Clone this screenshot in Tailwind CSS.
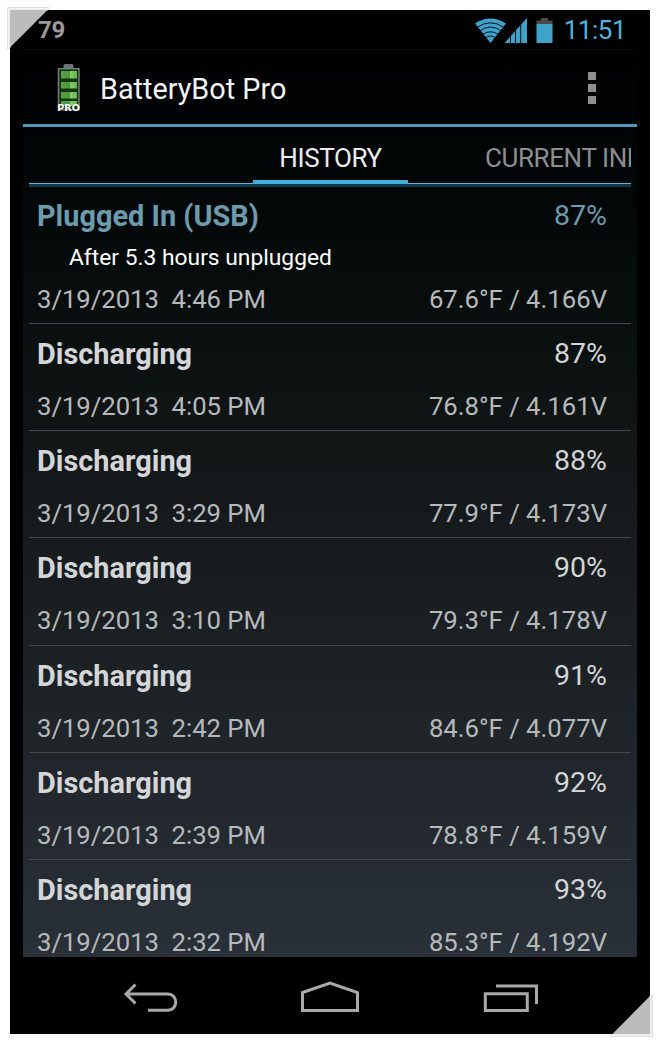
<!DOCTYPE html>
<html lang="en">
<head>
    <meta charset="UTF-8">
    <title>BatteryBot Pro</title>
    <script src="https://cdn.jsdelivr.net/npm/@tailwindcss/browser@4"></script>
</head>
<body class="bg-white w-[660px] h-[1044px] overflow-hidden p-[10px] font-['Roboto','Liberation_Sans',sans-serif]">
    <div class="relative w-[640px] h-[1024px] bg-black flex flex-col px-[13px]">
        <!-- Status bar -->
        <div class="h-10 shrink-0 flex items-center pt-px pl-[15px] pr-[11px] border-b border-[#0d0d0d]">
            <span class="text-[24px] font-bold text-[#9a9a9a] tracking-[-0.3px]">79</span>
            <svg class="ml-auto w-[80px] h-[28px]" viewBox="474 15 80 28">
                <path d="M475 22.500 Q490 12.500 506 22.500 L490.500 42 Z" fill="#3ea2cb"/>
                <g fill="none" stroke="#031019" stroke-width="1">
                    <path d="M477 26.500 Q490.500 17 504 26.500"/>
                    <path d="M479.500 30 Q490.500 22 501.500 30"/>
                    <path d="M482.500 33.500 Q490.500 28 498.500 33.500"/>
                    <path d="M485 37 Q490.500 33 496 37"/>
                </g>
                <path d="M504.500 42 L527 17 V42 Z" fill="#3ea2cb"/>
                <path d="M510.500 30V42M515.500 25V42M520.700 20V42" stroke="#031019" stroke-width="1"/>
                <path d="M541 17H548V19.500H552.500V24H536.500V19.500H541Z" fill="#4b4b49"/>
                <path d="M536.500 23H552.500V42H536.500Z" fill="#3ea2cb"/>
            </svg>
            <span class="ml-[10px] text-[26px] tracking-[-0.5px] text-[#52b2dc]">11:51</span>
        </div>

        <!-- App screen -->
        <div class="h-[907px] shrink-0 flex flex-col overflow-hidden bg-linear-to-b from-[#000202] via-[#131718] via-45% to-[#2a3038]">
            <header class="h-[77px] shrink-0 flex items-center pl-[33px] pr-[41px] border-b-[3px] border-[#5197b8]">
                <svg class="w-[25px] h-[50px] mt-0.5" viewBox="56 63 25 50">
                    <defs>
                        <linearGradient id="cell" x1="0" x2="1" y1="0" y2="0">
                            <stop offset="0" stop-color="#5a9f49"/>
                            <stop offset=".55" stop-color="#489a38"/>
                            <stop offset=".6" stop-color="#86cb6b"/>
                            <stop offset="1" stop-color="#66b552"/>
                        </linearGradient>
                    </defs>
                    <rect x="63.500" y="64" width="10" height="5" rx="1.500" fill="#6d7379"/>
                    <rect x="58.500" y="68.700" width="20.500" height="41" fill="#123410" stroke="#747c73" stroke-width="1.500"/>
                    <g fill="url(#cell)">
                        <rect x="61" y="71" width="16" height="7.500"/>
                        <rect x="61" y="82" width="16" height="6.500"/>
                        <rect x="61" y="92" width="16" height="6.500"/>
                        <rect x="61" y="101" width="16" height="5"/>
                    </g>
                    <text x="57.300" y="111.300" textLength="22.500" lengthAdjust="spacingAndGlyphs" font-family="DejaVu Sans" font-weight="bold" font-size="9.300" fill="#fff">PRO</text>
                </svg>
                <h1 class="ml-[19px] pt-[5px] text-[28.8px] text-[#f4f4f4]">BatteryBot Pro</h1>
                <div class="ml-auto mt-0.5 flex flex-col gap-1">
                    <span class="size-2 bg-[#8f8f8f]"></span>
                    <span class="size-2 bg-[#8f8f8f]"></span>
                    <span class="size-2 bg-[#8f8f8f]"></span>
                </div>
            </header>

            <!-- Tabs -->
            <nav class="mx-1.5 h-[60px] shrink-0 flex overflow-hidden border-b-3 border-[#10374b]">
                <div class="w-full h-[57px] flex border-b border-[#5fb3d6] whitespace-nowrap text-[26px] leading-[63px] tracking-[-0.4px]">
                    <span class="ml-[224px] w-[155px] shrink-0 h-[57px] text-center text-[#ececec] border-b-[4px] border-[#41aedb]">HISTORY</span>
                    <span class="ml-[77px] shrink-0 text-[#8c8e8f]">CURRENT INFO</span>
                </div>
            </nav>

            <ul id="history" class="mx-1.5 shrink-0"></ul>
        </div>

        <!-- Navigation bar -->
        <div class="flex-1 flex items-start">
            <svg class="w-[614px] h-[77px]" viewBox="23 957 614 77" fill="none" stroke="#a8a8a8" stroke-width="3">
                <path d="M135.500 984.500 L126 994 L135.500 1003.500 M127 994 H167.500 C178.500 994 178.500 1010.200 167.500 1010.200 H148"/>
                <path d="M302.500 992.500 L330 983 L357.500 992.500 V1010.500 H302.500 Z"/>
                <path d="M485.300 993.800 H527.300 V1010.500 H485.300 Z M496 986 H536.500 V1004"/>
            </svg>
        </div>

        <!-- Photo corners -->
        <svg class="absolute -top-[3px] -left-[3px] size-[44px]" viewBox="7 7 44 44">
            <path d="M7.500 49 V7.500 H49 L48 10 H10 V48 Z" fill="#f4f4f4" stroke="#dedede"/>
            <path d="M10 10 H47.500 L10 47.500 Z" fill="#bcbcbc"/>
        </svg>
        <svg class="absolute -bottom-[3px] -right-[3px] size-[44px]" viewBox="609 993 44 44">
            <path d="M652.500 995 V1036.500 H611 L614 1034 H650 V996 Z" fill="#f4f4f4" stroke="#dedede"/>
            <path d="M650 996 V1034 H612.500 Z" fill="#bcbcbc"/>
        </svg>
    </div>

    <script>
    const entries = [
        { title: 'Plugged In (USB)', level: '87%', note: 'After 5.3 hours unplugged', time: '4:46 PM', info: '67.6°F / 4.166V' },
        { title: 'Discharging', level: '87%', time: '4:05 PM', info: '76.8°F / 4.161V' },
        { title: 'Discharging', level: '88%', time: '3:29 PM', info: '77.9°F / 4.173V' },
        { title: 'Discharging', level: '90%', time: '3:10 PM', info: '79.3°F / 4.178V' },
        { title: 'Discharging', level: '91%', time: '2:42 PM', info: '84.6°F / 4.077V' },
        { title: 'Discharging', level: '92%', time: '2:39 PM', info: '78.8°F / 4.159V' },
        { title: 'Discharging', level: '93%', time: '2:32 PM', info: '85.3°F / 4.192V' },
    ];
    document.getElementById('history').innerHTML = entries.map(e => `
        <li class="${e.note ? 'h-[137px] pt-[11px]' : 'h-[107.2px] pt-3'} pl-2 pr-6 border-b border-[#44494b]">
            <div class="flex justify-between text-[28.5px] leading-9 ${e.note ? 'text-[#6c9bac]' : 'text-[#d3d5d6]'}">
                <span class="font-bold text-[28.9px]">${e.title}</span>
                <span>${e.level}</span>
            </div>
            ${e.note ? `<div class="mt-[10px] -mb-[7px] pl-8 text-[22.8px] leading-7 text-white">${e.note}</div>` : ''}
            <div class="mt-[18px] flex justify-between text-[25.7px] leading-8 text-[#b6b9bb] whitespace-pre"><span class="tracking-[-0.04px]">3/19/2013  ${e.time}</span><span>${e.info}</span></div>
        </li>
    `).join('');
    </script>
</body>
</html>
